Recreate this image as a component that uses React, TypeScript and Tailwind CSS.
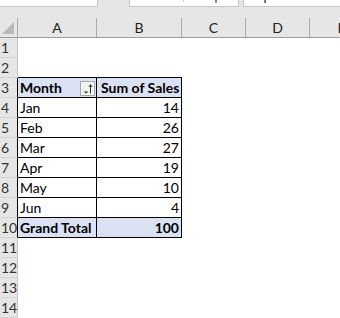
import React from "react";

type Row = { n: number; a?: string; b?: string; kind?: "head" | "data" | "total" };

const rows: Row[] = [
  { n: 1 },
  { n: 2 },
  { n: 3, a: "Month", b: "Sum of Sales", kind: "head" },
  { n: 4, a: "Jan", b: "14", kind: "data" },
  { n: 5, a: "Feb", b: "26", kind: "data" },
  { n: 6, a: "Mar", b: "27", kind: "data" },
  { n: 7, a: "Apr", b: "19", kind: "data" },
  { n: 8, a: "May", b: "10", kind: "data" },
  { n: 9, a: "Jun", b: "4", kind: "data" },
  { n: 10, a: "Grand Total", b: "100", kind: "total" },
  { n: 11 },
  { n: 12 },
  { n: 13 },
  { n: 14 },
];

function FilterButton() {
  return (
    <div className="mr-[1px] flex h-[15px] w-[15px] shrink-0 items-center justify-center border border-[#a8a8a8] bg-[#f3f3f3]">
      <svg width="13" height="13" viewBox="0 0 13 13">
        <path d="M2.5 9.5 L5 11.5 L7.5 9.5 Z" fill="#333" />
        <path d="M9.5 11.5 V3" stroke="#333" strokeWidth="1" />
        <path d="M7.8 5 L9.5 2.6 L11.2 5" stroke="#333" strokeWidth="1" fill="none" />
      </svg>
    </div>
  );
}

export default function App() {
  return (
    <div
      className="h-[318px] w-[340px] overflow-hidden bg-white text-black"
      style={{ fontFamily: "Lato, 'Liberation Sans', sans-serif" }}
    >
      {/* top gray area */}
      <div className="border-b border-[#9c9c9c] bg-[#e6e6e6]">
        <div className="flex h-[7px]">
          <div className="h-[7px] w-[98px] border-b border-r border-[#c6c6c6] bg-white" />
          <div className="w-[31px]" />
          <div className="flex h-[7px] w-[110px] border-b border-l border-r border-[#c6c6c6] bg-white">
            <div className="ml-[53px] h-[2px] w-[1px] bg-[#d0d0d0]" />
            <div className="ml-[31px] h-[3px] w-[2px] bg-[#8a8a8a]" />
          </div>
          <div className="w-[4px]" />
          <div className="flex h-[7px] flex-1 border-b border-l border-[#c6c6c6] bg-white">
            <div className="ml-[20px] h-[3px] w-[1px] bg-[#c87a3a]" />
            <div className="h-[3px] w-[1px] bg-[#3a6ac8]" />
          </div>
        </div>
        <div className="flex h-[30px] items-end">
          <div className="relative h-[19px] w-[18px] shrink-0 border-r border-[#ababab]">
            <svg className="absolute left-0 top-0" width="17" height="19" viewBox="0 0 17 19">
              <path d="M14 4 L14 16 L2 16 Z" fill="#b9b9b9" />
            </svg>
          </div>
          {[
            ["A", "w-[79px]"],
            ["B", "w-[85px]"],
            ["C", "w-[64px]"],
            ["D", "w-[64px]"],
            ["E", "w-[64px]"],
          ].map(([l, w]) => (
            <div
              key={l}
              className={`${w} flex h-[19px] shrink-0 items-center justify-center border-r border-[#ababab] pt-[1px] text-[14px] leading-none text-[#222]`}
            >
              {l}
            </div>
          ))}
        </div>
      </div>

      {rows.map((r) => {
        const inTable = !!r.kind;
        const bottomBlack = inTable || r.n === 2;
        const bold = r.kind === "head" || r.kind === "total";
        const bg = bold ? "bg-[#d9e1f2]" : "bg-white";
        return (
          <div key={r.n} className="flex h-[20px]">
            <div
              className={`flex h-[20px] w-[18px] shrink-0 items-center overflow-visible whitespace-nowrap border-b border-r border-b-[#d2d2d2] bg-[#e6e6e6] pl-[1px] text-[14px] leading-none text-[#333] ${
                inTable ? "border-r-black" : "border-r-[#c6c6c6]"
              }`}
            >
              {r.n}
            </div>
            <div
              className={`flex h-[20px] w-[79px] shrink-0 items-center justify-between whitespace-nowrap border-b pl-[2px] pt-[1px] text-[14px] leading-none ${
                bottomBlack ? "border-b-black" : "border-b-transparent"
              } ${inTable ? `border-r border-r-black ${bg}` : ""} ${bold ? "font-bold" : ""}`}
            >
              <span>{r.a}</span>
              {r.kind === "head" && <FilterButton />}
            </div>
            <div
              className={`flex h-[20px] w-[85px] shrink-0 items-center whitespace-nowrap border-b pr-[2px] pt-[1px] text-[14px] leading-none ${
                bottomBlack ? "border-b-black" : "border-b-transparent"
              } ${inTable ? `border-r border-r-black ${bg}` : ""} ${bold ? "font-bold" : ""} ${
                r.kind === "head" ? "justify-start pl-[4px]" : "justify-end"
              }`}
            >
              {r.b}
            </div>
            <div className="flex-1" />
          </div>
        );
      })}
    </div>
  );
}
